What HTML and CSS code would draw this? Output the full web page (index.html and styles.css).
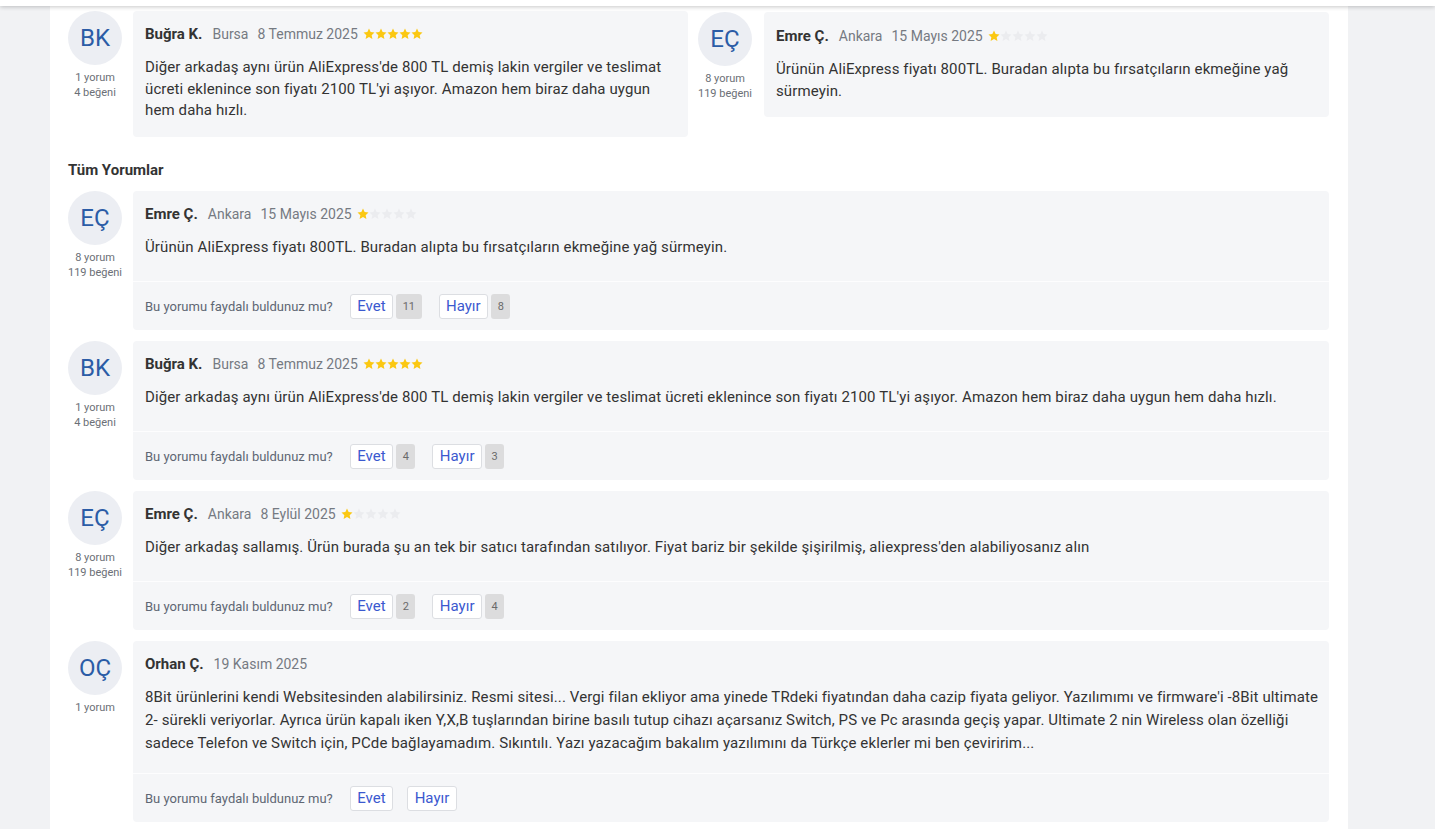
FILE: index.html
```html
<!DOCTYPE html>
<html lang="tr">
<head>
<meta charset="utf-8">
<title>Yorumlar</title>
<link rel="stylesheet" href="styles.css">
</head>
<body>
<div class="topbar"></div>
<div class="page">
  <div class="container">
    <div class="featured">
      <div class="review">
        <div class="author">
          <div class="avatar">BK</div>
          <div class="stats">1 yorum<br>4 beğeni</div>
        </div>
        <div class="card card-featured">
          <div class="card-main">
            <div class="meta">
              <span class="name">Buğra K.</span>
              <span class="city">Bursa</span>
              <span class="date">8 Temmuz 2025</span>
              <span class="stars" data-rating="5">
                <svg class="star on" viewBox="0 0 12 12"><path d="M6 .5l1.65 3.55 3.85.45-2.85 2.65.75 3.85L6 9.1 2.6 11l.75-3.85L.5 4.5l3.85-.45z"/></svg><svg class="star on" viewBox="0 0 12 12"><path d="M6 .5l1.65 3.55 3.85.45-2.85 2.65.75 3.85L6 9.1 2.6 11l.75-3.85L.5 4.5l3.85-.45z"/></svg><svg class="star on" viewBox="0 0 12 12"><path d="M6 .5l1.65 3.55 3.85.45-2.85 2.65.75 3.85L6 9.1 2.6 11l.75-3.85L.5 4.5l3.85-.45z"/></svg><svg class="star on" viewBox="0 0 12 12"><path d="M6 .5l1.65 3.55 3.85.45-2.85 2.65.75 3.85L6 9.1 2.6 11l.75-3.85L.5 4.5l3.85-.45z"/></svg><svg class="star on" viewBox="0 0 12 12"><path d="M6 .5l1.65 3.55 3.85.45-2.85 2.65.75 3.85L6 9.1 2.6 11l.75-3.85L.5 4.5l3.85-.45z"/></svg>
              </span>
            </div>
            <p class="text text-featured">Diğer arkadaş aynı ürün AliExpress'de 800 TL demiş lakin vergiler ve teslimat ücreti eklenince son fiyatı 2100 TL'yi aşıyor. Amazon hem biraz daha uygun hem daha hızlı.</p>
          </div>
        </div>
      </div>
      <div class="review review-alt">
        <div class="author">
          <div class="avatar">EÇ</div>
          <div class="stats">8 yorum<br>119 beğeni</div>
        </div>
        <div class="card card-featured">
          <div class="card-main">
            <div class="meta">
              <span class="name">Emre Ç.</span>
              <span class="city">Ankara</span>
              <span class="date">15 Mayıs 2025</span>
              <span class="stars" data-rating="1">
                <svg class="star on" viewBox="0 0 12 12"><path d="M6 .5l1.65 3.55 3.85.45-2.85 2.65.75 3.85L6 9.1 2.6 11l.75-3.85L.5 4.5l3.85-.45z"/></svg><svg class="star" viewBox="0 0 12 12"><path d="M6 .5l1.65 3.55 3.85.45-2.85 2.65.75 3.85L6 9.1 2.6 11l.75-3.85L.5 4.5l3.85-.45z"/></svg><svg class="star" viewBox="0 0 12 12"><path d="M6 .5l1.65 3.55 3.85.45-2.85 2.65.75 3.85L6 9.1 2.6 11l.75-3.85L.5 4.5l3.85-.45z"/></svg><svg class="star" viewBox="0 0 12 12"><path d="M6 .5l1.65 3.55 3.85.45-2.85 2.65.75 3.85L6 9.1 2.6 11l.75-3.85L.5 4.5l3.85-.45z"/></svg><svg class="star" viewBox="0 0 12 12"><path d="M6 .5l1.65 3.55 3.85.45-2.85 2.65.75 3.85L6 9.1 2.6 11l.75-3.85L.5 4.5l3.85-.45z"/></svg>
              </span>
            </div>
            <p class="text text-featured">Ürünün AliExpress fiyatı 800TL. Buradan alıpta bu fırsatçıların ekmeğine yağ sürmeyin.</p>
          </div>
        </div>
      </div>
    </div>

    <h3 class="section-title">Tüm Yorumlar</h3>

    <div class="list">
      <div class="review">
        <div class="author">
          <div class="avatar">EÇ</div>
          <div class="stats">8 yorum<br>119 beğeni</div>
        </div>
        <div class="card">
          <div class="card-main">
            <div class="meta">
              <span class="name">Emre Ç.</span>
              <span class="city">Ankara</span>
              <span class="date">15 Mayıs 2025</span>
              <span class="stars">
                <svg class="star on" viewBox="0 0 12 12"><path d="M6 .5l1.65 3.55 3.85.45-2.85 2.65.75 3.85L6 9.1 2.6 11l.75-3.85L.5 4.5l3.85-.45z"/></svg><svg class="star" viewBox="0 0 12 12"><path d="M6 .5l1.65 3.55 3.85.45-2.85 2.65.75 3.85L6 9.1 2.6 11l.75-3.85L.5 4.5l3.85-.45z"/></svg><svg class="star" viewBox="0 0 12 12"><path d="M6 .5l1.65 3.55 3.85.45-2.85 2.65.75 3.85L6 9.1 2.6 11l.75-3.85L.5 4.5l3.85-.45z"/></svg><svg class="star" viewBox="0 0 12 12"><path d="M6 .5l1.65 3.55 3.85.45-2.85 2.65.75 3.85L6 9.1 2.6 11l.75-3.85L.5 4.5l3.85-.45z"/></svg><svg class="star" viewBox="0 0 12 12"><path d="M6 .5l1.65 3.55 3.85.45-2.85 2.65.75 3.85L6 9.1 2.6 11l.75-3.85L.5 4.5l3.85-.45z"/></svg>
              </span>
            </div>
            <p class="text">Ürünün AliExpress fiyatı 800TL. Buradan alıpta bu fırsatçıların ekmeğine yağ sürmeyin.</p>
          </div>
          <div class="card-foot">
            <span class="ask">Bu yorumu faydalı buldunuz mu?</span>
            <span class="vote"><button class="btn">Evet</button><span class="count">11</span></span>
            <span class="vote"><button class="btn">Hayır</button><span class="count">8</span></span>
          </div>
        </div>
      </div>

      <div class="review">
        <div class="author">
          <div class="avatar">BK</div>
          <div class="stats">1 yorum<br>4 beğeni</div>
        </div>
        <div class="card">
          <div class="card-main">
            <div class="meta">
              <span class="name">Buğra K.</span>
              <span class="city">Bursa</span>
              <span class="date">8 Temmuz 2025</span>
              <span class="stars">
                <svg class="star on" viewBox="0 0 12 12"><path d="M6 .5l1.65 3.55 3.85.45-2.85 2.65.75 3.85L6 9.1 2.6 11l.75-3.85L.5 4.5l3.85-.45z"/></svg><svg class="star on" viewBox="0 0 12 12"><path d="M6 .5l1.65 3.55 3.85.45-2.85 2.65.75 3.85L6 9.1 2.6 11l.75-3.85L.5 4.5l3.85-.45z"/></svg><svg class="star on" viewBox="0 0 12 12"><path d="M6 .5l1.65 3.55 3.85.45-2.85 2.65.75 3.85L6 9.1 2.6 11l.75-3.85L.5 4.5l3.85-.45z"/></svg><svg class="star on" viewBox="0 0 12 12"><path d="M6 .5l1.65 3.55 3.85.45-2.85 2.65.75 3.85L6 9.1 2.6 11l.75-3.85L.5 4.5l3.85-.45z"/></svg><svg class="star on" viewBox="0 0 12 12"><path d="M6 .5l1.65 3.55 3.85.45-2.85 2.65.75 3.85L6 9.1 2.6 11l.75-3.85L.5 4.5l3.85-.45z"/></svg>
              </span>
            </div>
            <p class="text">Diğer arkadaş aynı ürün AliExpress'de 800 TL demiş lakin vergiler ve teslimat ücreti eklenince son fiyatı 2100 TL'yi aşıyor. Amazon hem biraz daha uygun hem daha hızlı.</p>
          </div>
          <div class="card-foot">
            <span class="ask">Bu yorumu faydalı buldunuz mu?</span>
            <span class="vote"><button class="btn">Evet</button><span class="count">4</span></span>
            <span class="vote"><button class="btn">Hayır</button><span class="count">3</span></span>
          </div>
        </div>
      </div>

      <div class="review">
        <div class="author">
          <div class="avatar">EÇ</div>
          <div class="stats">8 yorum<br>119 beğeni</div>
        </div>
        <div class="card">
          <div class="card-main">
            <div class="meta">
              <span class="name">Emre Ç.</span>
              <span class="city">Ankara</span>
              <span class="date">8 Eylül 2025</span>
              <span class="stars">
                <svg class="star on" viewBox="0 0 12 12"><path d="M6 .5l1.65 3.55 3.85.45-2.85 2.65.75 3.85L6 9.1 2.6 11l.75-3.85L.5 4.5l3.85-.45z"/></svg><svg class="star" viewBox="0 0 12 12"><path d="M6 .5l1.65 3.55 3.85.45-2.85 2.65.75 3.85L6 9.1 2.6 11l.75-3.85L.5 4.5l3.85-.45z"/></svg><svg class="star" viewBox="0 0 12 12"><path d="M6 .5l1.65 3.55 3.85.45-2.85 2.65.75 3.85L6 9.1 2.6 11l.75-3.85L.5 4.5l3.85-.45z"/></svg><svg class="star" viewBox="0 0 12 12"><path d="M6 .5l1.65 3.55 3.85.45-2.85 2.65.75 3.85L6 9.1 2.6 11l.75-3.85L.5 4.5l3.85-.45z"/></svg><svg class="star" viewBox="0 0 12 12"><path d="M6 .5l1.65 3.55 3.85.45-2.85 2.65.75 3.85L6 9.1 2.6 11l.75-3.85L.5 4.5l3.85-.45z"/></svg>
              </span>
            </div>
            <p class="text">Diğer arkadaş sallamış. Ürün burada şu an tek bir satıcı tarafından satılıyor. Fiyat bariz bir şekilde şişirilmiş, aliexpress'den alabiliyosanız alın</p>
          </div>
          <div class="card-foot">
            <span class="ask">Bu yorumu faydalı buldunuz mu?</span>
            <span class="vote"><button class="btn">Evet</button><span class="count">2</span></span>
            <span class="vote"><button class="btn">Hayır</button><span class="count">4</span></span>
          </div>
        </div>
      </div>

      <div class="review">
        <div class="author">
          <div class="avatar">OÇ</div>
          <div class="stats">1 yorum</div>
        </div>
        <div class="card">
          <div class="card-main">
            <div class="meta">
              <span class="name">Orhan Ç.</span>
              <span class="date">19 Kasım 2025</span>
            </div>
            <p class="text">8Bit ürünlerini kendi Websitesinden alabilirsiniz. Resmi sitesi... Vergi filan ekliyor ama yinede TRdeki fiyatından daha cazip fiyata geliyor. Yazılımımı ve firmware'i -8Bit ultimate 2- sürekli veriyorlar. Ayrıca ürün kapalı iken Y,X,B tuşlarından birine basılı tutup cihazı açarsanız Switch, PS ve Pc arasında geçiş yapar. Ultimate 2 nin Wireless olan özelliği sadece Telefon ve Switch için, PCde bağlayamadım. Sıkıntılı. Yazı yazacağım bakalım yazılımını da Türkçe eklerler mi ben çeviririm...</p>
          </div>
          <div class="card-foot">
            <span class="ask">Bu yorumu faydalı buldunuz mu?</span>
            <span class="vote"><button class="btn">Evet</button></span>
            <span class="vote"><button class="btn">Hayır</button></span>
          </div>
        </div>
      </div>
    </div>
  </div>
</div>
</body>
</html>
```

FILE: styles.css
```css
* { box-sizing: border-box; }

html, body {
  margin: 0;
  padding: 0;
  background: #f1f2f4;
  font-family: Roboto, "Liberation Sans", Arial, sans-serif;
  color: #333;
}

.topbar {
  height: 6px;
  background: #fff;
  box-shadow: 0 1px 4px rgba(0, 0, 0, 0.22);
  position: relative;
  z-index: 2;
}

.page {
  padding-left: 50px;
  width: 1348px;
}

.container {
  background: #fff;
  padding: 5px 19px 11px 18px;
  min-height: 823px;
}

.featured {
  display: grid;
  grid-template-columns: 620px 1fr;
  column-gap: 10px;
  align-items: start;
}

.review {
  display: flex;
  align-items: flex-start;
  gap: 11px;
}

.review-alt {
  gap: 12px;
  margin-top: 1px;
}

.author {
  width: 54px;
  flex: 0 0 54px;
  display: flex;
  flex-direction: column;
  align-items: center;
}

.avatar {
  width: 54px;
  height: 54px;
  border-radius: 50%;
  background: #eceef3;
  color: #2b5ca6;
  font-size: 24px;
  display: flex;
  align-items: center;
  justify-content: center;
}

.stats {
  margin-top: 5px;
  font-size: 11px;
  line-height: 15px;
  color: #6b6f76;
  text-align: center;
  white-space: nowrap;
}

.card {
  flex: 1;
  background: #f5f6f8;
  border-radius: 4px;
  min-width: 0;
}

.card-main {
  padding: 13px 8px 18px 12px;
  min-height: 90px;
}

.card-featured .card-main {
  padding-top: 13px;
  padding-bottom: 15px;
  padding-right: 12px;
}

.review-alt .card-featured .card-main {
  padding-top: 14px;
}

.meta {
  display: flex;
  align-items: center;
  height: 20px;
  font-size: 14px;
  white-space: nowrap;
}

.name {
  font-weight: 700;
  font-size: 15px;
  color: #333;
  margin-right: 10px;
}

.city {
  color: #757a82;
  margin-right: 9px;
}

.date {
  color: #757a82;
  margin-right: 5px;
}

.stars {
  display: inline-flex;
  align-items: center;
  margin-top: -1px;
}

.star {
  width: 12px;
  height: 12px;
  fill: #ebecef;
}

.star.on {
  fill: #fbc812;
}

.text {
  margin: 12px 0 0;
  font-size: 15px;
  line-height: 23px;
  letter-spacing: 0.12px;
  color: #333;
}

.text-featured {
  margin-top: 13px;
  line-height: 21.7px;
}

.card-foot {
  border-top: 1px solid #fdfdfe;
  height: 49px;
  padding: 0 12px;
  display: flex;
  align-items: center;
}

.ask {
  font-size: 13px;
  color: #5e6673;
  margin-right: 17px;
}

.vote {
  display: inline-flex;
  align-items: center;
  margin-right: 14px;
}

.btn {
  font-family: inherit;
  font-size: 15px;
  line-height: 23px;
  height: 25px;
  padding: 0 6.5px;
  background: #fff;
  color: #3b59cf;
  border: 1px solid #dcdee2;
  border-radius: 3px;
  cursor: pointer;
}

.count {
  margin: 0 3px;
  height: 25px;
  line-height: 25px;
  padding: 0 6.5px;
  background: #dcdcdd;
  color: #6a6a6a;
  font-size: 11px;
  border-radius: 3px;
}

.section-title {
  margin: 23px 0 11px;
  font-size: 15px;
  line-height: 20px;
  font-weight: 700;
  color: #333;
}

.list {
  display: flex;
  flex-direction: column;
  gap: 11px;
}
```
